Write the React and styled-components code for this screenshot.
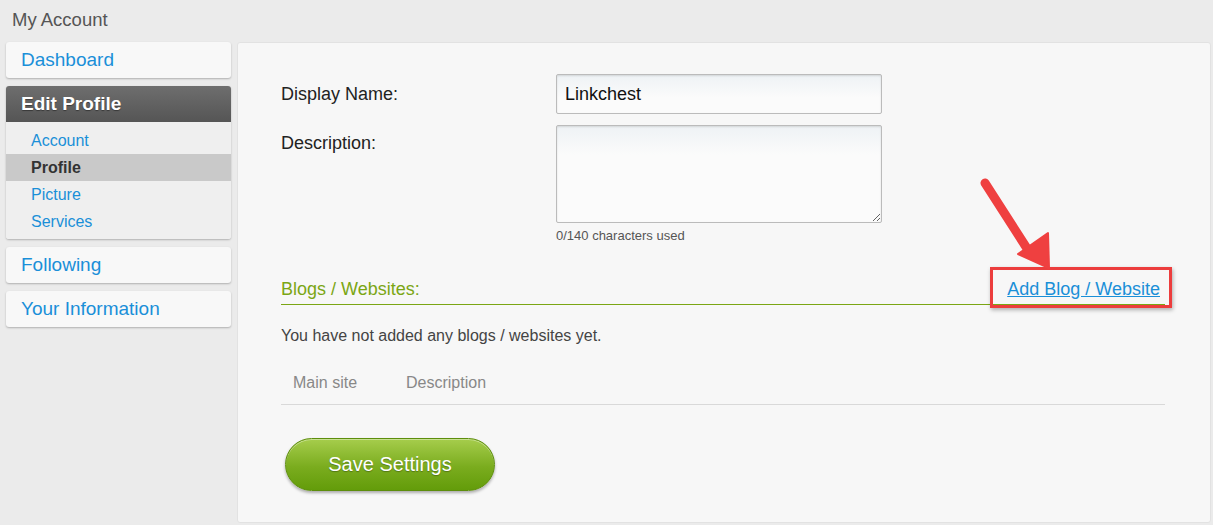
import styled, { createGlobalStyle } from "styled-components";

const GlobalStyle = createGlobalStyle`
  html, body {
    margin: 0;
    padding: 0;
    background: #ebebeb;
    font-family: "Liberation Sans", Arial, sans-serif;
  }
`;

const Page = styled.div`
  width: 1213px;
  height: 525px;
  box-sizing: border-box;
  padding: 0 2px 0 6px;
  overflow: hidden;
`;

const Title = styled.div`
  height: 42px;
  line-height: 40px;
  padding-left: 6px;
  font-size: 18.5px;
  color: #555;
`;

const Layout = styled.div`
  display: flex;
  gap: 6px;
  align-items: flex-start;
`;

const Sidebar = styled.nav`
  width: 225px;
  display: flex;
  flex-direction: column;
  gap: 8px;
  flex-shrink: 0;
`;

const NavBox = styled.div`
  background: #f8f8f8;
  border-radius: 3px;
  box-shadow: 0 1px 2px rgba(0, 0, 0, 0.25);
  overflow: hidden;
`;

const NavLink = styled.a`
  display: block;
  height: 36px;
  line-height: 36px;
  padding-left: 15px;
  font-size: 19px;
  color: #1a8fd8;
  text-decoration: none;
`;

const GroupHeader = styled.div`
  height: 36px;
  line-height: 36px;
  padding-left: 15px;
  font-size: 19px;
  font-weight: bold;
  color: #fff;
  text-shadow: 0 1px 1px rgba(0, 0, 0, 0.4);
  background: linear-gradient(#6e6e6e, #555);
`;

const SubList = styled.div`
  background: #efefef;
  padding: 5px 0 4px;
`;

const SubItem = styled.a`
  display: block;
  height: 27px;
  line-height: 27px;
  padding-left: 25px;
  font-size: 16px;
  text-decoration: none;
  color: ${(p) => (p.$active ? "#333" : "#1a8fd8")};
  font-weight: ${(p) => (p.$active ? "bold" : "normal")};
  background: ${(p) => (p.$active ? "#c9c9c9" : "transparent")};
`;

const Panel = styled.main`
  position: relative;
  flex: 1;
  height: 481px;
  box-sizing: border-box;
  background: #f7f7f7;
  border: 1px solid #e2e2e2;
  border-radius: 3px;
  padding: 31px 45px 0 43px;
`;

const FormRow = styled.div`
  display: flex;
  align-items: ${(p) => (p.$top ? "flex-start" : "center")};
  margin-bottom: 11px;
`;

const Label = styled.label`
  width: 275px;
  font-size: 18px;
  color: #222;
  padding-top: ${(p) => (p.$top ? "8px" : "0")};
`;

const TextInput = styled.input`
  width: 326px;
  height: 40px;
  box-sizing: border-box;
  border: 1px solid #bbb;
  border-radius: 2px;
  padding: 0 8px;
  font-family: inherit;
  font-size: 18px;
  color: #111;
  background: linear-gradient(#eef2f5, #fbfbfb 60%);
  box-shadow: inset 0 1px 2px rgba(0, 0, 0, 0.12);
`;

const FieldCol = styled.div`
  display: flex;
  flex-direction: column;
`;

const TextArea = styled.textarea`
  width: 326px;
  height: 98px;
  box-sizing: border-box;
  border: 1px solid #bbb;
  border-radius: 2px;
  background: linear-gradient(#eef2f5, #fbfbfb 30%);
  box-shadow: inset 0 1px 2px rgba(0, 0, 0, 0.12);
  resize: vertical;
`;

const Counter = styled.div`
  margin-top: 5px;
  font-size: 13px;
  color: #555;
`;

const SectionHead = styled.div`
  display: flex;
  justify-content: space-between;
  align-items: flex-end;
  margin-top: 35px;
  padding-bottom: 4px;
  border-bottom: 1px solid #7ba614;
`;

const SectionTitle = styled.div`
  font-size: 18px;
  color: #7ba614;
  line-height: 22px;
`;

const AddWrap = styled.div`
  position: relative;
  margin-right: 5px;
`;

const AddLink = styled.a`
  font-size: 18px;
  line-height: 22px;
  color: #1a8fd8;
  text-decoration: underline;
  cursor: pointer;
`;

const Highlight = styled.div`
  position: absolute;
  left: -17px;
  right: -12px;
  top: -11px;
  bottom: -8px;
  border: 3px solid #ec3d3d;
  box-shadow: 1px 2px 4px rgba(0, 0, 0, 0.3);
  pointer-events: none;
`;

const Arrow = styled.svg`
  position: absolute;
  left: 740px;
  top: 135px;
  overflow: visible;
`;

const Empty = styled.p`
  margin: 22px 0 0;
  font-size: 16px;
  color: #444;
`;

const Table = styled.div`
  display: flex;
  margin-top: 16px;
  height: 43px;
  align-items: center;
  border-bottom: 1px solid #d9d9d9;
`;

const Th = styled.div`
  width: ${(p) => p.$w || "auto"};
  padding-left: 12px;
  font-size: 16px;
  color: #888;
`;

const SaveButton = styled.button`
  margin: 33px 0 0 4px;
  width: 210px;
  height: 53px;
  border: 1px solid #5d8e0c;
  border-radius: 27px;
  font-family: inherit;
  font-size: 20px;
  color: #fff;
  text-shadow: 0 1px 1px rgba(0, 0, 0, 0.3);
  background: linear-gradient(#a6cd4c, #7aac1e 55%, #639c0a);
  box-shadow: 0 2px 3px rgba(0, 0, 0, 0.3), inset 0 1px 0 rgba(255, 255, 255, 0.4);
  cursor: pointer;
`;

export default function App() {
  return (
    <Page>
      <GlobalStyle />
      <Title>My Account</Title>
      <Layout>
        <Sidebar>
          <NavBox>
            <NavLink>Dashboard</NavLink>
          </NavBox>
          <NavBox>
            <GroupHeader>Edit Profile</GroupHeader>
            <SubList>
              <SubItem>Account</SubItem>
              <SubItem $active>Profile</SubItem>
              <SubItem>Picture</SubItem>
              <SubItem>Services</SubItem>
            </SubList>
          </NavBox>
          <NavBox>
            <NavLink>Following</NavLink>
          </NavBox>
          <NavBox>
            <NavLink>Your Information</NavLink>
          </NavBox>
        </Sidebar>

        <Panel>
          <FormRow>
            <Label>Display Name:</Label>
            <TextInput defaultValue="Linkchest" />
          </FormRow>
          <FormRow $top>
            <Label $top>Description:</Label>
            <FieldCol>
              <TextArea />
              <Counter>0/140 characters used</Counter>
            </FieldCol>
          </FormRow>

          <SectionHead>
            <SectionTitle>Blogs / Websites:</SectionTitle>
            <AddWrap>
              <AddLink>Add Blog / Website</AddLink>
              <Highlight />
            </AddWrap>
          </SectionHead>

          <Empty>You have not added any blogs / websites yet.</Empty>

          <Table>
            <Th $w="101px">Main site</Th>
            <Th>Description</Th>
          </Table>

          <SaveButton>Save Settings</SaveButton>

          <Arrow width="80" height="100" viewBox="0 0 80 100">
            <line x1="7" y1="5" x2="50" y2="72" stroke="#ef4040" strokeWidth="9" strokeLinecap="round" />
            <polygon points="40,76 70,55 71,90" fill="#ef4040" strokeLinejoin="round" stroke="#ef4040" strokeWidth="2" />
          </Arrow>
        </Panel>
      </Layout>
    </Page>
  );
}
